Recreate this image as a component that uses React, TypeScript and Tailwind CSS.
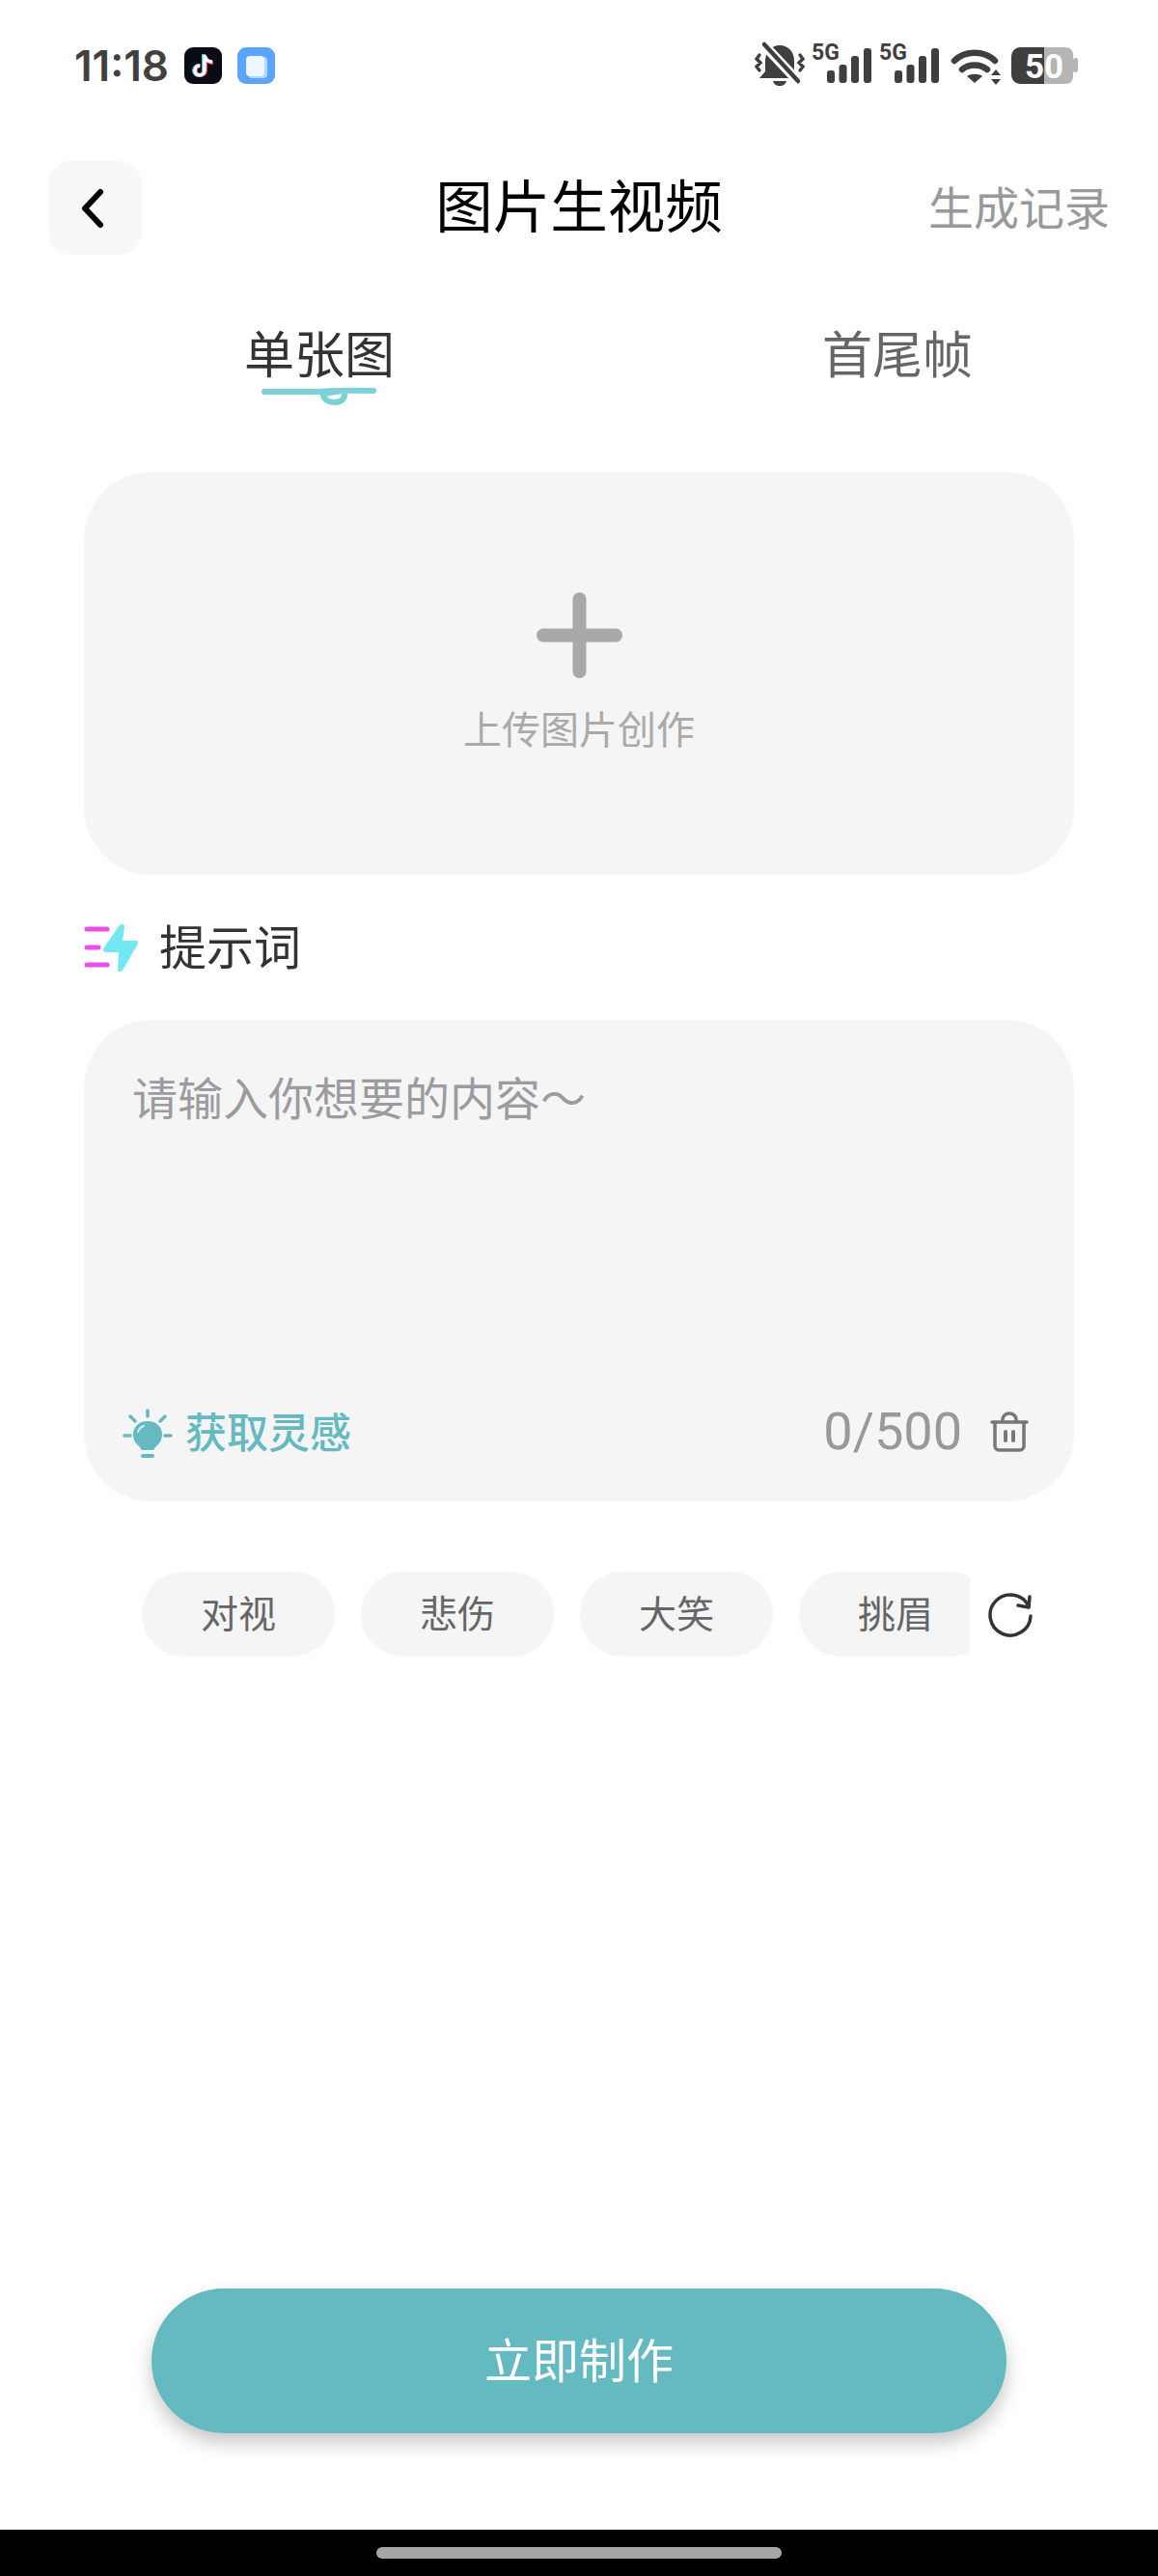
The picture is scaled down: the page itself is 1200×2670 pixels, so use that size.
import React from "react";

const StatusIcons: React.FC = () => (
  <svg width="340" height="58" viewBox="780 35 340 58" className="block">
    {/* muted bell */}
    <path d="M808 47c-10 0-15 8-15 16v11l-6 7h42l-6-7V63c0-8-5-16-15-16z" fill="#3f3f3f" />
    <path d="M801 84h14c-1 3-3 5-7 5s-6-2-7-5z" fill="#3f3f3f" />
    <path d="M792 47l34 36" stroke="#fff" strokeWidth="10" />
    <path d="M792 46l35 38" stroke="#3f3f3f" strokeWidth="4.500" strokeLinecap="round" />
    <path d="M787 57l-3 4 4 4-4 4 3 4M829 57l3 4-4 4 4 4-3 4" stroke="#3f3f3f" strokeWidth="3.400" fill="none" strokeLinecap="round" />
    <text x="841" y="62" fontFamily="Roboto" fontWeight="700" fontSize="23" fill="#3f3f3f">5G</text>
    <rect x="857" y="73" width="8" height="13" rx="3" fill="#3f3f3f" />
    <rect x="869.500" y="67" width="8" height="19" rx="3" fill="#3f3f3f" />
    <rect x="882" y="58" width="8" height="28" rx="3" fill="#3f3f3f" />
    <rect x="895" y="50" width="8" height="36" rx="3" fill="#3f3f3f" />
    <text x="911" y="62" fontFamily="Roboto" fontWeight="700" fontSize="23" fill="#3f3f3f">5G</text>
    <rect x="927" y="73" width="8" height="13" rx="3" fill="#3f3f3f" />
    <rect x="939.500" y="67" width="8" height="19" rx="3" fill="#3f3f3f" />
    <rect x="952" y="58" width="8" height="28" rx="3" fill="#3f3f3f" />
    <rect x="965" y="50" width="8" height="36" rx="3" fill="#3f3f3f" />
    {/* wifi */}
    <path d="M989 63c11-11 31-11 42 0" stroke="#3f3f3f" strokeWidth="6.500" fill="none" strokeLinecap="round" />
    <path d="M997 72c7-6 19-6 26 0" stroke="#3f3f3f" strokeWidth="6.500" fill="none" strokeLinecap="round" />
    <path d="M1002 79c4-3 12-3 16 0l-8 7z" fill="#3f3f3f" />
    <path d="M1032 72l5 6h-10zM1032 88l5-6h-10z" fill="#3f3f3f" />
    {/* battery */}
    <path d="M1082 49h22c5 0 8 3 8 8v22c0 5-3 8-8 8h-22z" fill="#b5b5b5" />
    <rect x="1112" y="60" width="5" height="15" rx="2.500" fill="#b5b5b5" />
    <path d="M1082 49h-24c-6 0-10 4-10 10v18c0 6 4 10 10 10h24z" fill="#3f3f3f" />
    <text x="1062" y="81" fontFamily="Roboto" fontWeight="700" fontSize="35" fill="#fff">50</text>
  </svg>
);

const App: React.FC = () => {
  const chips = ["对视", "悲伤", "大笑", "挑眉"];

  return (
    <div className="w-[1200px] h-[2670px] flex flex-col bg-white overflow-hidden font-['Roboto','Noto_Sans_CJK_SC',sans-serif]">
      <div className="h-[167px] shrink-0 flex justify-between pt-[35px] pl-[77px] pr-[80px]">
        <div className="flex items-start pt-[8px]">
          <span className="w-[94px] text-[44px] leading-[50px] font-semibold whitespace-nowrap text-[#404040] font-['Inter',sans-serif]">
            11:18
          </span>
          <div className="ml-[20px] mt-[6px] w-[39px] h-[38px] rounded-[9px] bg-[#0b0b14] flex items-center justify-center">
            <svg width="28" height="30" viewBox="0 0 28 30">
              <path d="M14 3v17a5 5 0 1 1-5-5" fill="none" stroke="#25d9e0" strokeWidth="4" />
              <path d="M16 5v15a5 5 0 1 1-5-5M16 6c1 4 4 6 8 6" fill="none" stroke="#f0345a" strokeWidth="4" />
              <path d="M15 4v16a5 5 0 1 1-5-5M15 5c1 4 4 6 8 6" fill="none" stroke="#fff" strokeWidth="3.500" />
            </svg>
          </div>
          <div className="ml-[16px] mt-[6px] w-[39px] h-[38px] rounded-[9px] bg-[#5aa5ff] relative">
            <div className="absolute left-[11px] top-[10px] w-[20px] h-[22px] rounded-[4px] bg-[#b5d6ff]" />
            <div className="absolute left-[9px] top-[9px] w-[19px] h-[21px] rounded-[4px] bg-[#eef6ff]" />
          </div>
        </div>
        <StatusIcons />
      </div>

      <div className="h-[97px] shrink-0 px-[50px] grid grid-cols-[1fr_auto_1fr] items-center">
        <div className="w-[97px] h-[97px] rounded-[24px] bg-[#f8f8f8] flex items-center justify-center">
          <svg width="28" height="44" viewBox="0 0 28 44" className="mr-[6px]">
            <path d="M22 5L6 22l16 17" fill="none" stroke="#000" strokeWidth="6" strokeLinecap="round" strokeLinejoin="round" />
          </svg>
        </div>
        <h1 className="pt-[2px] text-[59.500px] leading-none font-normal text-black">图片生视频</h1>
        <div className="pt-[2px] text-right text-[47px] leading-none text-[#999999]">生成记录</div>
      </div>

      <div className="h-[225px] shrink-0 flex pl-[253px] pt-[80px] gap-[443px] text-[52px] leading-none">
        <div className="relative text-[#333333]">
          单张图
          <svg width="120" height="22" viewBox="0 0 120 22" className="absolute left-[18px] top-[56px]">
            <path d="M3 6h56c4 0 18-2 57-1M64 7c-1 6 4 10 12 10 8 0 11-5 10-11-6-2-12 1-20 2" fill="none" stroke="#7dd0d6" strokeWidth="6" strokeLinecap="round" />
          </svg>
        </div>
        <div className="text-[#666666]">首尾帧</div>
      </div>

      <div className="flex-1 px-[87px] flex flex-col">
        <div className="h-[418px] rounded-[70px] bg-[#f5f5f5] flex flex-col items-center pt-[125px]">
          <svg width="89" height="89" viewBox="0 0 89 89">
            <path d="M44.500 7v75M7 44.500h75" stroke="#a9a9a9" strokeWidth="14" strokeLinecap="round" />
          </svg>
          <div className="mt-[35px] text-[40px] leading-none text-[#aaaaaa]">上传图片创作</div>
        </div>

        <div className="h-[150px] flex items-center">
          <svg width="56" height="51" viewBox="0 0 56 51">
            <path d="M3 6h21M3 25h12M3 43h21" stroke="#e84fe4" strokeWidth="5" strokeLinecap="round" />
            <path d="M36 3c2-3 6-3 6 1l-2 14h13c3 0 4 2 2 5L41 47c-2 4-6 4-6 0l1-17H23c-3 0-4-2-2-5z" fill="#72e8f2" />
          </svg>
          <span className="ml-[22px] mt-[3px] text-[49px] leading-none text-[#333333]">提示词</span>
        </div>

        <div className="h-[499px] rounded-[70px] bg-[#f5f5f5] flex flex-col justify-between pl-[40px] pr-[47px] pt-[59px] pb-[42px]">
          <div className="ml-[10px] text-[47px] leading-none text-[#9b9ba0]">请输入你想要的内容～</div>
          <div className="flex items-center justify-between">
            <div className="flex items-center">
              <svg width="52" height="52" viewBox="0 0 52 52">
                <path d="M26 13c-9 0-15 6-15 14 0 6 3 9 6 12 2 2 2 3 3 4h12c1-1 1-2 3-4 3-3 6-6 6-12 0-8-6-14-15-14z" fill="#65b9c1" />
                <path d="M21 49h10" stroke="#65b9c1" strokeWidth="4" strokeLinecap="round" />
                <path d="M26 2v6M8 8l5 5M44 8l-5 5M2 28h6M44 28h6" stroke="#65b9c1" strokeWidth="3.500" strokeLinecap="round" />
                <path d="M16 24c1-3 3-5 6-6" stroke="#d6eef0" strokeWidth="2" fill="none" strokeLinecap="round" />
              </svg>
              <span className="ml-[13px] mt-[2px] text-[43px] leading-none font-medium text-[#65b9c1]">获取灵感</span>
            </div>
            <div className="flex items-center mb-[3px]">
              <span className="text-[54px] leading-none text-[#999999]">0/500</span>
              <svg width="40" height="42" viewBox="0 0 40 42" className="ml-[29px]">
                <path d="M2 11h36M13 11V8c0-3 3-6 7-6s7 3 7 6v3" fill="none" stroke="#777777" strokeWidth="3.500" strokeLinecap="round" />
                <path d="M5 11v25c0 2 2 4 4 4h22c2 0 4-2 4-4V11" fill="none" stroke="#777777" strokeWidth="3.500" />
                <path d="M16 21v9M24 21v9" stroke="#777777" strokeWidth="4" strokeLinecap="round" />
              </svg>
            </div>
          </div>
        </div>

        <div className="mt-[73px] ml-[60px] flex items-center">
          <div className="w-[858px] flex gap-[27px] overflow-hidden">
            {chips.map((chip) => (
              <div
                key={chip}
                className="w-[200px] h-[88px] shrink-0 rounded-full bg-[#f5f5f5] flex items-center justify-center pt-[2px] text-[39px] leading-none text-[#666666]"
              >
                {chip}
              </div>
            ))}
          </div>
          <svg width="48" height="48" viewBox="0 0 48 48" className="ml-[18px]">
            <path d="M43 16A21 21 0 1 0 45 26" fill="none" stroke="#333333" strokeWidth="3.500" strokeLinecap="round" />
            <path d="M44 6l-1 11-11-2" fill="none" stroke="#333333" strokeWidth="3.500" strokeLinecap="round" strokeLinejoin="round" />
          </svg>
        </div>
      </div>

      <div className="h-[250px] shrink-0 flex justify-center">
        <button className="w-[886px] h-[150px] rounded-[75px] bg-[#65b9c1] pt-[3px] text-white text-[49px] leading-none shadow-[0_10px_20px_rgba(0,0,0,0.22)]">
          立即制作
        </button>
      </div>

      <div className="h-[48px] shrink-0 bg-black flex justify-center pt-[18px]">
        <div className="w-[420px] h-[12px] rounded-[6px] bg-[#a6a6a6]" />
      </div>
    </div>
  );
};

export default App;
